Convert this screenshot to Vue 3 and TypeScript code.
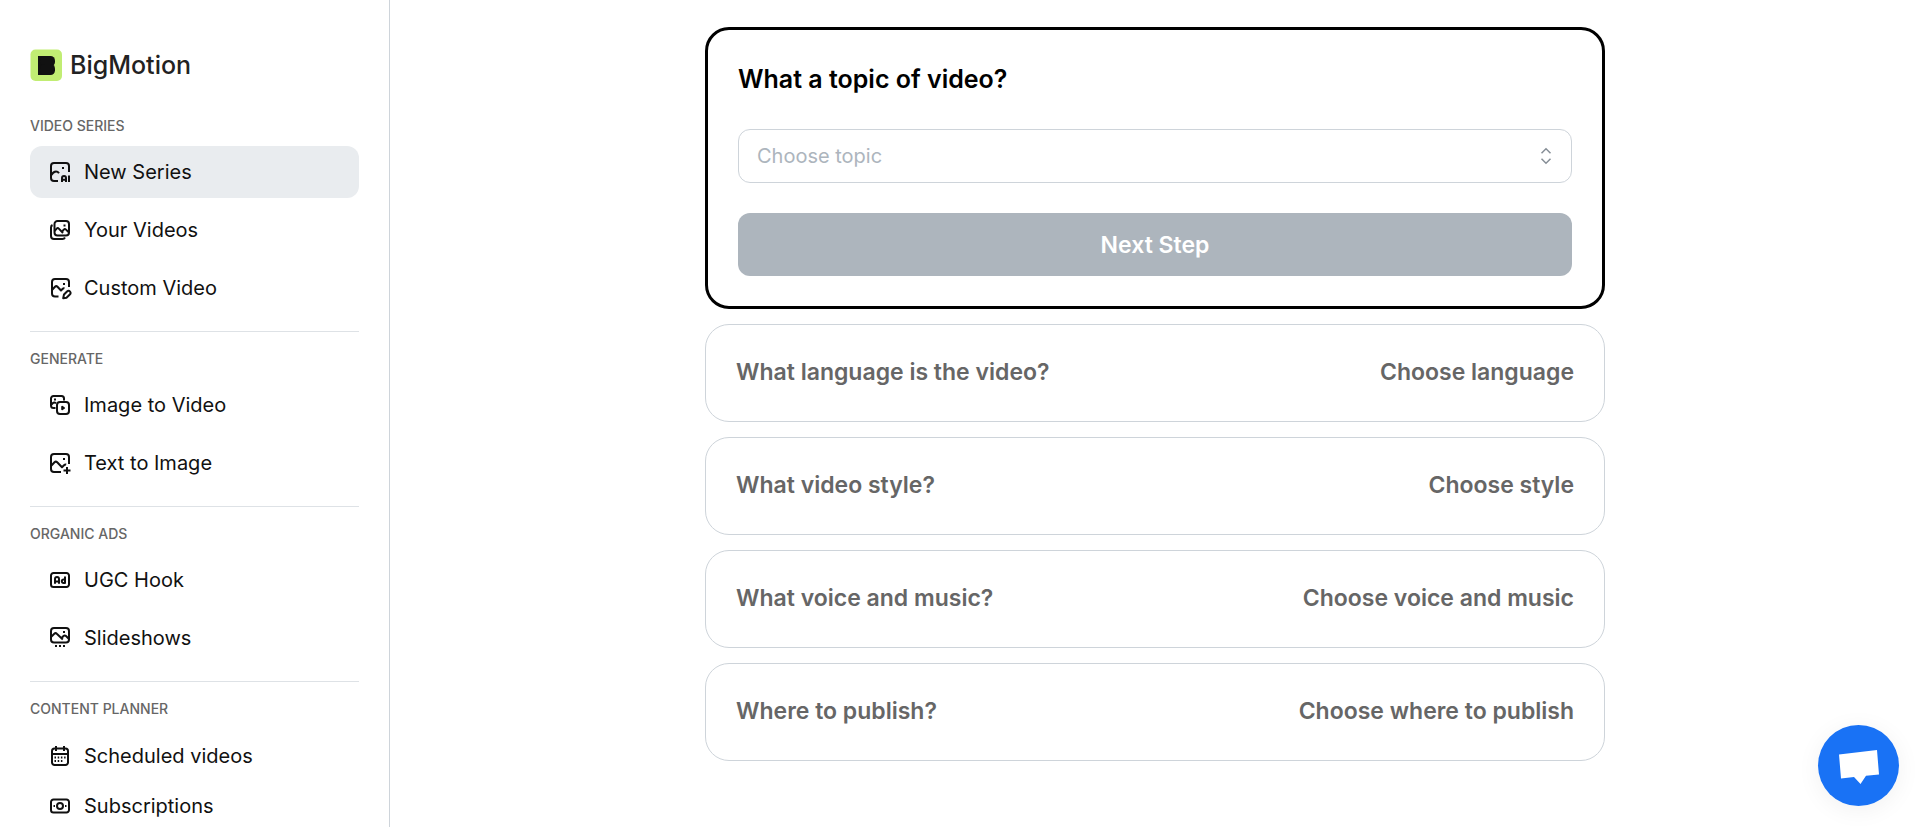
<script setup lang="ts">
import { ref } from 'vue'

type IconName = 'ai' | 'gallery' | 'edit' | 'convert' | 'add' | 'ad' | 'slides' | 'calendar' | 'money'

interface NavItem {
  label: string
  icon: IconName
}

interface NavSection {
  title: string
  items: NavItem[]
  compact?: boolean
}

const sections: NavSection[] = [
  {
    title: 'VIDEO SERIES',
    items: [
      { label: 'New Series', icon: 'ai' },
      { label: 'Your Videos', icon: 'gallery' },
      { label: 'Custom Video', icon: 'edit' },
    ],
  },
  {
    title: 'GENERATE',
    items: [
      { label: 'Image to Video', icon: 'convert' },
      { label: 'Text to Image', icon: 'add' },
    ],
  },
  {
    title: 'ORGANIC ADS',
    items: [
      { label: 'UGC Hook', icon: 'ad' },
      { label: 'Slideshows', icon: 'slides' },
    ],
  },
  {
    title: 'CONTENT PLANNER',
    compact: true,
    items: [
      { label: 'Scheduled videos', icon: 'calendar' },
      { label: 'Subscriptions', icon: 'money' },
    ],
  },
]

const icons: Record<IconName, string[]> = {
  ai: [
    'M10 21H6a3 3 0 0 1-3-3V6a3 3 0 0 1 3-3h12a3 3 0 0 1 3 3v6',
    'M3 15.500c1.500-2.500 3.200-4 5-4 1.200 0 2.200.6 3 1.800',
    'M14 8h2',
    'M14 22v-4a2 2 0 0 1 4 0v4M14 19.700h4M21 15.500V22',
  ],
  gallery: [
    'M9.500 3H18a3 3 0 0 1 3 3v8.500a3 3 0 0 1-3 3H9.500a3 3 0 0 1-3-3V6a3 3 0 0 1 3-3z',
    'M6.500 13l2.200-2.400c.7-.7 1.400-.7 2.100 0l4.200 4.400M14.500 13l1.300-1.400c.7-.7 1.500-.7 2.200 0l3 2.900',
    'M15.500 7.500h2',
    'M4.500 7C3.500 7.500 3 8.300 3 9.500V18a3 3 0 0 0 3 3h8.500c1.200 0 2-.5 2.500-1.500',
  ],
  edit: [
    'M10.500 20.500H7a3 3 0 0 1-3-3V6a3 3 0 0 1 3-3h11a3 3 0 0 1 3 3v5',
    'M4 14l3-3.200c.8-.8 1.700-.8 2.500 0l3.500 3.700 1.500-1.500c.6-.6 1.200-.9 2-.6',
    'M15 8h2',
    'M16 18.500l3-3c1-1 2.200-1 3 0s.8 2-.2 3l-3.300 3.200-3.300.6z',
  ],
  convert: [
    'M7.500 15H5.500A2.500 2.500 0 0 1 3 12.500v-7A2.500 2.500 0 0 1 5.500 3h8A2.500 2.500 0 0 1 16 5.500v2',
    'M3 12l2-2c.8-.8 1.800-.8 3 .2',
    'M6 6.500h2',
    'M12 9h6a3 3 0 0 1 3 3v6a3 3 0 0 1-3 3h-6a3 3 0 0 1-3-3v-6a3 3 0 0 1 3-3z',
    'M14.200 13.800v2.400l1.800-1.200z',
  ],
  add: [
    'M13 21H6a3 3 0 0 1-3-3V6a3 3 0 0 1 3-3h12a3 3 0 0 1 3 3v7',
    'M3 15l3.500-3.700c.9-.9 1.800-.9 2.700 0l4.800 5 2-2c.7-.7 1.300-.9 2.200-.7',
    'M15 8h2',
    'M19 16v7M15.500 19.500h7',
  ],
  ad: [
    'M5.500 5h13A2.500 2.500 0 0 1 21 7.500v9a2.500 2.500 0 0 1-2.500 2.500h-13A2.500 2.500 0 0 1 3 16.500v-9A2.500 2.500 0 0 1 5.500 5z',
    'M7 15.800V11a2 2 0 0 1 4 0v4.800M7 13.500h4',
    'M17 8.500v6.500h-1.500a1.700 1.700 0 0 1-1.700-1.700v-.1a1.700 1.700 0 0 1 1.700-1.700H17',
  ],
  slides: [
    'M6 2h12a3 3 0 0 1 3 3v8.500a3 3 0 0 1-3 3H6a3 3 0 0 1-3-3V5a3 3 0 0 1 3-3z',
    'M3 11l3.300-3.200c.8-.8 1.700-.8 2.500 0l6 5.700M13.500 12l2-2c.8-.8 1.700-.8 2.500 0l3 3',
    'M15 6h2',
    'M7 20h2M11 20h2M15 20h2',
  ],
  calendar: [
    'M6.500 4.500h11A2.500 2.500 0 0 1 20 7v11.500a2.500 2.500 0 0 1-2.500 2.500h-11A2.500 2.500 0 0 1 4 18.500V7a2.500 2.500 0 0 1 2.500-2.500z',
    'M8 2v5M16 2v5M4 10h16',
    'M6.500 13.500h1.500M9.700 13.500h1.500M12.900 13.500h1.500M16.100 13.500h1.500M6.500 17h1.500M9.700 17h1.500M12.900 17h1.500',
  ],
  money: [
    'M5.500 5.500h13A2.500 2.500 0 0 1 21 8v8a2.500 2.500 0 0 1-2.500 2.500h-13A2.500 2.500 0 0 1 3 16V8a2.500 2.500 0 0 1 2.500-2.500z',
    'M12 9a3 3 0 1 1 0 6 3 3 0 0 1 0-6z',
    'M5.500 12h1.500M17 12h1.500',
  ],
}

const steps = [
  { question: 'What language is the video?', answer: 'Choose language' },
  { question: 'What video style?', answer: 'Choose style' },
  { question: 'What voice and music?', answer: 'Choose voice and music' },
  { question: 'Where to publish?', answer: 'Choose where to publish' },
]

const active = ref('New Series')
const topic = ref('')
</script>

<template>
  <div class="layout">
    <aside class="sidebar">
      <a class="brand" href="#">
        <svg class="brand-mark" viewBox="0 0 32 32" aria-hidden="true">
          <rect x="0.500" y="0.500" width="31.500" height="31.500" rx="5" fill="#c1ed73" />
          <rect x="8" y="7" width="9" height="19" fill="#111" />
          <rect x="10" y="7" width="15" height="10.500" rx="4.500" fill="#111" />
          <rect x="10" y="15" width="15" height="11" rx="4.500" fill="#111" />
        </svg>
        <span>BigMotion</span>
      </a>
      <nav>
        <section v-for="section in sections" :key="section.title" class="section" :class="{ compact: section.compact }">
          <h2 class="section-title">{{ section.title }}</h2>
          <ul class="items">
            <li v-for="item in section.items" :key="item.label">
              <a class="item" :class="{ active: active === item.label }" href="#" @click.prevent="active = item.label">
                <svg class="icon" viewBox="0 0 24 24" aria-hidden="true">
                  <path v-for="d in icons[item.icon]" :key="d" :d="d" />
                </svg>
                <span>{{ item.label }}</span>
              </a>
            </li>
          </ul>
        </section>
      </nav>
    </aside>

    <main class="main">
      <div class="steps">
        <form class="card" @submit.prevent>
          <label class="title" for="topic">What a topic of video?</label>
          <div class="field">
            <select id="topic" v-model="topic" class="select">
              <option value="">Choose topic</option>
            </select>
            <svg class="chevrons" viewBox="0 0 12 18" aria-hidden="true">
              <path d="M1.500 6.200 6 1.800l4.500 4.400M1.500 11.800 6 16.200l4.500-4.400" />
            </svg>
          </div>
          <button class="next" type="submit" :disabled="!topic">Next Step</button>
        </form>
        <button v-for="step in steps" :key="step.question" class="step" type="button">
          <span>{{ step.question }}</span>
          <span>{{ step.answer }}</span>
        </button>
      </div>
    </main>

    <button class="chat" type="button" aria-label="Open chat">
      <svg viewBox="0 0 81 81" aria-hidden="true">
        <path d="M21 29.500 59 25l2 24.500-13 1.300-5.500 8.200-6.500-7-13 1.500z" fill="#fff" />
      </svg>
    </button>
  </div>
</template>

<style>
body {
  margin: 0;
  background: #fff;
}
</style>

<style scoped>
.layout {
  display: flex;
  height: 100vh;
  overflow: hidden;
  font-family: Inter, "Liberation Sans", sans-serif;
  color: #111;
}

.layout * {
  box-sizing: border-box;
}

.sidebar {
  flex: none;
  width: 390px;
  padding: 48px 30px 20px;
  border-right: 1px solid #ced4da;
  overflow-y: auto;
  scrollbar-width: none;
}

.brand {
  display: flex;
  align-items: center;
  gap: 8px;
  height: 33px;
  margin-bottom: 36px;
  color: #222;
  font-size: 25px;
  font-weight: 500;
  text-decoration: none;
}

.brand-mark {
  width: 32px;
  height: 32px;
}

.section + .section {
  margin-top: 17px;
  padding-top: 18px;
  border-top: 1px solid #dee2e6;
}

.section-title {
  margin: 0 0 11px;
  color: #666;
  font-size: 14px;
  font-weight: 500;
  line-height: 18px;
}

.items {
  display: flex;
  flex-direction: column;
  gap: 6px;
  margin: 0;
  padding: 0;
  list-style: none;
}

.item {
  display: flex;
  align-items: center;
  gap: 12px;
  height: 52px;
  padding: 0 18px;
  border-radius: 12px;
  color: #111;
  font-size: 20px;
  text-decoration: none;
}

.item.active {
  background: #e9ecef;
}

.compact .items {
  gap: 0;
  padding-top: 2px;
}

.compact .item {
  height: 50px;
}

.icon {
  flex: none;
  width: 24px;
  height: 24px;
  fill: none;
  stroke: currentColor;
  stroke-width: 2;
  stroke-linejoin: round;
}

.main {
  flex: 1;
  min-width: 0;
  padding: 27px 30px;
  overflow-y: auto;
  scrollbar-width: none;
}

.steps {
  display: flex;
  flex-direction: column;
  gap: 15px;
  max-width: 900px;
  margin: 0 auto;
}

.card {
  display: flex;
  flex-direction: column;
  gap: 30px;
  padding: 30px;
  border: 3px solid #000;
  border-radius: 24px;
}

.title {
  color: #000;
  font-size: 25px;
  font-weight: 600;
  line-height: 39px;
}

.field {
  display: grid;
  align-items: center;
}

.select {
  grid-area: 1 / 1;
  width: 100%;
  height: 54px;
  padding: 0 18px;
  border: 1px solid #ced4da;
  border-radius: 12px;
  background: #fff;
  color: #adb5bd;
  font: inherit;
  font-size: 20px;
  appearance: none;
}

.chevrons {
  grid-area: 1 / 1;
  justify-self: end;
  width: 12px;
  height: 18px;
  margin-right: 20px;
  fill: none;
  stroke: #868e96;
  stroke-width: 1.5;
  pointer-events: none;
}

.next {
  height: 63px;
  border: 0;
  border-radius: 12px;
  background: #adb5bd;
  color: #fff;
  font: inherit;
  font-size: 23px;
  font-weight: 600;
}

.step {
  display: flex;
  align-items: center;
  justify-content: space-between;
  height: 98px;
  padding: 0 30px 2px;
  border: 1px solid #ced4da;
  border-radius: 24px;
  background: #fff;
  color: #666;
  font: inherit;
  font-size: 23px;
  font-weight: 600;
}

.chat {
  position: fixed;
  right: 21px;
  bottom: 21px;
  width: 81px;
  height: 81px;
  padding: 0;
  border: 0;
  border-radius: 50%;
  background: #1972f5;
  box-shadow: 0 4px 24px rgba(0, 0, 0, 0.06);
}

.chat svg {
  display: block;
  width: 100%;
}
</style>
